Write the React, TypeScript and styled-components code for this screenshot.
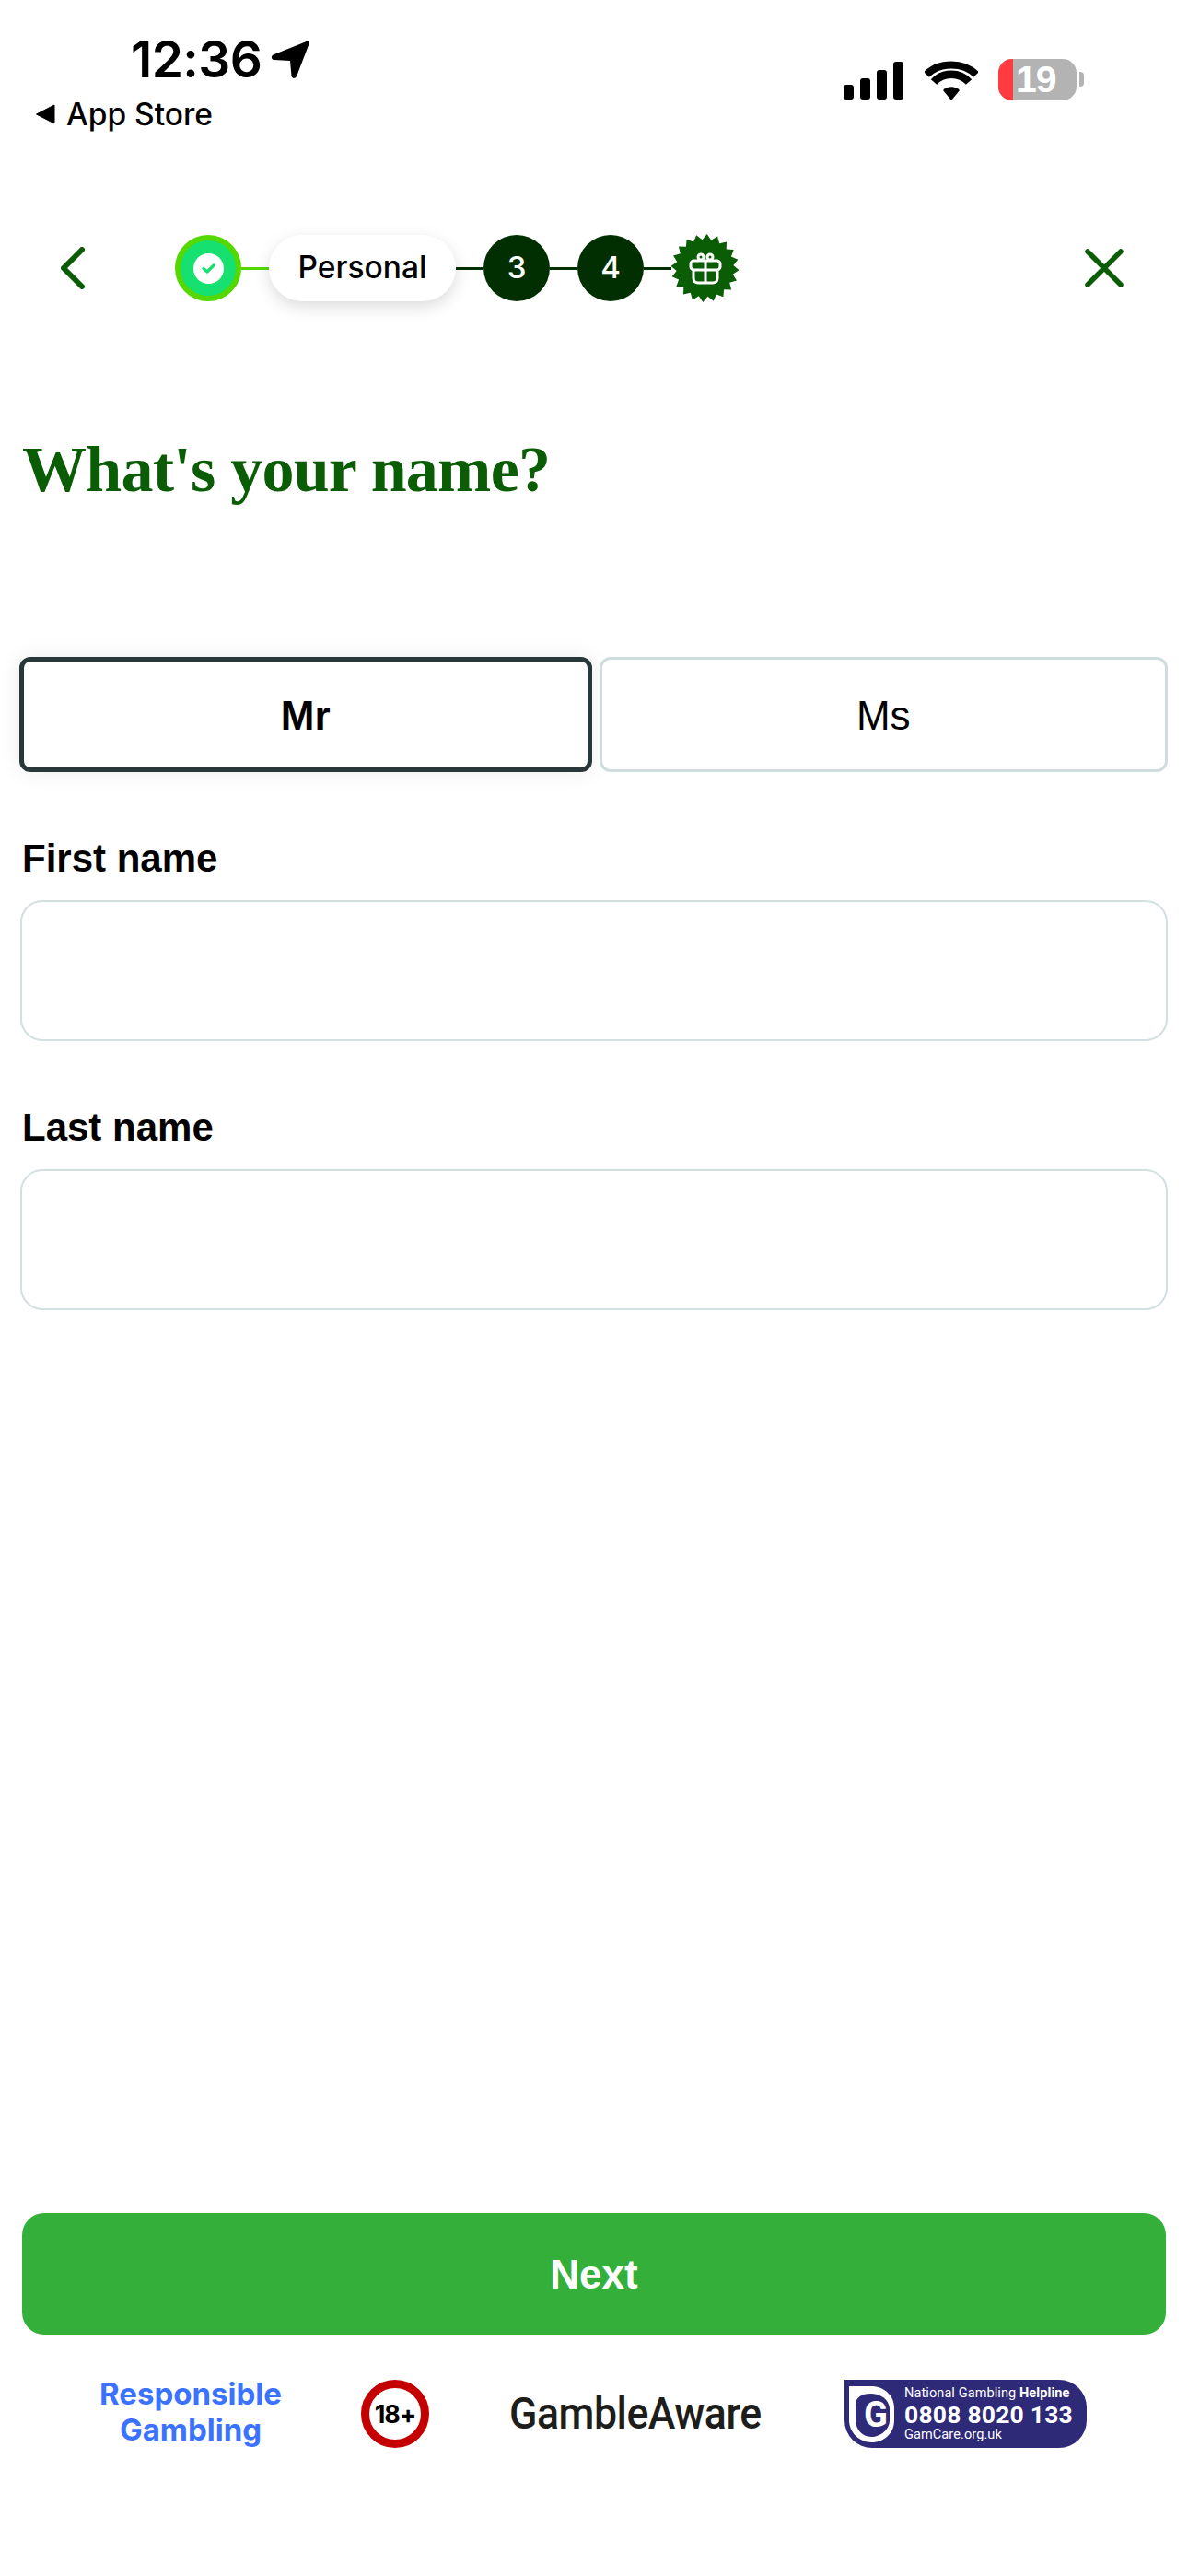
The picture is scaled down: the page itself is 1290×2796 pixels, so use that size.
import { FunctionComponent } from "react";
import styled, { createGlobalStyle } from "styled-components";

const GlobalStyle = createGlobalStyle`
  html, body {
    margin: 0;
    padding: 0;
    background: #fff;
  }
  * {
    box-sizing: border-box;
  }
`;

const Page = styled.div`
  width: 1290px;
  height: 2796px;
  display: flex;
  flex-direction: column;
  background: #fff;
  font-family: "Liberation Sans", Arial, sans-serif;
  color: #000;
`;

const StatusBar = styled.div`
  height: 255px;
  display: flex;
  justify-content: space-between;
  align-items: flex-start;
  font-family: Inter, "Liberation Sans", sans-serif;
`;

const StatusLeft = styled.div`
  display: flex;
  flex-direction: column;
  padding: 32px 0 0 38px;
`;

const TimeRow = styled.div`
  display: flex;
  align-items: center;
  gap: 10px;
  padding-left: 104px;
  height: 64px;
`;

const Time = styled.span`
  font-size: 55px;
  font-weight: 600;
  line-height: 64px;
  letter-spacing: -0.6px;
`;

const BackToApp = styled.div`
  display: flex;
  align-items: center;
  gap: 12px;
  height: 40px;
  margin-top: 8px;
  font-size: 33.5px;
  font-weight: 500;
  line-height: 40px;
`;

const StatusRight = styled.div`
  display: flex;
  align-items: flex-end;
  padding: 64px 113px 0 0;
`;

const Signal = styled.div`
  display: flex;
  align-items: flex-end;
  gap: 7px;
  height: 43px;
  padding-bottom: 1px;
`;

const SignalBar = styled.span<{ $h: number }>`
  width: 11px;
  height: ${(p) => p.$h}px;
  border-radius: 3px;
  background: #000;
`;

const WifiIcon = styled.svg`
  width: 58px;
  height: 43px;
  margin: 0 22px 0 23px;
`;

const Battery = styled.div`
  position: relative;
  width: 85px;
  height: 45px;
  border-radius: 15px;
  overflow: hidden;
  display: flex;
  align-items: center;
  padding-left: 19px;
  background: #b3b3b3;
  color: #fff;
  font-family: "Liberation Sans", sans-serif;
  font-size: 41px;
  font-weight: 700;
  letter-spacing: -1px;

  &::before {
    content: "";
    position: absolute;
    left: 0;
    top: 0;
    bottom: 0;
    width: 16px;
    background: #ff3b3f;
  }
`;

const BatteryNub = styled.span`
  width: 5px;
  height: 16px;
  margin: 0 0 15px 3px;
  border-radius: 0 4px 4px 0;
  background: #b3b3b3;
`;

const Nav = styled.div`
  height: 72px;
  display: flex;
  align-items: center;
  padding: 0 70px 0 66px;
`;

const NavIcon = styled.svg`
  display: block;
  flex: none;
`;

const Stepper = styled.div`
  display: flex;
  align-items: center;
  margin-left: 98px;
  margin-right: auto;
`;

const Connector = styled.span<{ $done?: boolean }>`
  width: 30px;
  height: 3px;
  background: ${(p) => (p.$done ? "#55d800" : "#022f02")};
`;

const DoneStep = styled.div`
  width: 72px;
  height: 72px;
  border-radius: 50%;
  border: 6px solid #55d800;
  background: #16e070;
  display: flex;
  align-items: center;
  justify-content: center;
`;

const DoneDot = styled.div`
  width: 33px;
  height: 33px;
  border-radius: 50%;
  background: #fff;
  display: flex;
  align-items: center;
  justify-content: center;
`;

const ActivePill = styled.div`
  width: 203px;
  height: 72px;
  padding-bottom: 2px;
  border-radius: 36px;
  background: #fff;
  box-shadow: 0 6px 18px rgba(0, 0, 0, 0.14);
  display: flex;
  align-items: center;
  justify-content: center;
  font-family: Inter, "Liberation Sans", sans-serif;
  font-size: 33.5px;
  font-weight: 500;
`;

const NumberStep = styled.div`
  width: 72px;
  height: 72px;
  padding-bottom: 2px;
  border-radius: 50%;
  background: #022f02;
  color: #fff;
  display: flex;
  align-items: center;
  justify-content: center;
  font-family: Inter, "Liberation Sans", sans-serif;
  font-size: 33px;
  font-weight: 500;
`;

const GiftStep = styled.div`
  position: relative;
  width: 73px;
  height: 74px;
  display: flex;
  align-items: center;
  justify-content: center;

  svg.burst {
    position: absolute;
    inset: 0;
  }

  svg.gift {
    position: relative;
  }
`;

const Title = styled.h1`
  margin: 143px 0 0 24px;
  font-family: "Liberation Serif", "Times New Roman", serif;
  font-size: 70px;
  font-weight: 700;
  line-height: 80px;
  letter-spacing: -0.75px;
  color: #0a5c05;
`;

const GenderRow = styled.div`
  display: flex;
  gap: 8px;
  margin-top: 163px;
  padding: 0 22px 0 21px;
`;

const GenderButton = styled.button<{ $active?: boolean }>`
  flex: 1;
  height: 125px;
  padding: 2px 0 0;
  border-radius: 12px;
  background: #fff;
  color: #000;
  font-family: "Liberation Sans", Arial, sans-serif;
  font-size: 44px;
  font-weight: ${(p) => (p.$active ? 700 : 400)};
  border: ${(p) => (p.$active ? "5px solid #27373a" : "3px solid #d0dddf")};
  box-shadow: ${(p) => (p.$active ? "0 0 24px rgba(0, 0, 0, 0.08)" : "none")};
`;

const Field = styled.div`
  display: flex;
  flex-direction: column;
  padding: 0 22px 0 22px;
  margin-top: 69px;
`;

const Label = styled.label`
  margin-left: 2px;
  font-size: 42px;
  font-weight: 700;
  line-height: 50px;
  margin-bottom: 20px;
`;

const TextInput = styled.input`
  height: 153px;
  border: 2px solid #d3dfe0;
  border-radius: 24px;
  background: #fff;
  outline: none;
`;

const Spacer = styled.div`
  flex: 1;
`;

const NextButton = styled.button`
  display: block;
  margin: 0 24px;
  height: 132px;
  padding: 2px 0 0;
  border: none;
  border-radius: 24px;
  background: #34b03a;
  color: #fff;
  font-family: "Liberation Sans", Arial, sans-serif;
  font-size: 44px;
  font-weight: 700;
`;

const Footer = styled.div`
  height: 262px;
  display: flex;
  align-items: flex-start;
  padding: 49px 0 0 108px;
`;

const Responsible = styled.div`
  width: 198px;
  text-align: center;
  font-family: Inter, "Liberation Sans", sans-serif;
  font-size: 33px;
  font-weight: 700;
  line-height: 39px;
  color: #3b72ff;
  white-space: nowrap;
  margin-top: -4px;
`;

const AgeBadge = styled.div`
  width: 74px;
  height: 74px;
  margin-left: 86px;
  border: 9px solid #c40000;
  border-radius: 50%;
  display: flex;
  align-items: center;
  justify-content: center;
  font-family: Inter, "Liberation Sans", sans-serif;
  font-size: 27px;
  font-weight: 700;
  letter-spacing: -1px;
`;

const GambleAware = styled.div`
  margin-left: 87px;
  width: 276px;
  height: 74px;
  font-family: Roboto, "Liberation Sans", sans-serif;
  font-size: 49px;
  font-weight: 500;
  line-height: 74px;
  letter-spacing: -0.5px;
  color: #1d1d1b;
  white-space: nowrap;
  transform: scaleX(0.91);
  transform-origin: left center;
`;

const Helpline = styled.div`
  margin-left: 88px;
  width: 263px;
  height: 74px;
  display: flex;
  align-items: center;
  padding-left: 5px;
  border-radius: 0 30px 30px 30px;
  background: #2e2a78;
  color: #fff;
  font-family: Roboto, "Liberation Sans", sans-serif;
`;

const HelplineText = styled.div`
  display: flex;
  flex-direction: column;
  margin-left: 11px;
  white-space: nowrap;
`;

const HelplineSmall = styled.span`
  font-size: 14.5px;
  line-height: 18px;
  letter-spacing: 0.1px;

  b {
    font-weight: 700;
  }
`;

const HelplineNumber = styled.span`
  font-size: 26.5px;
  font-weight: 700;
  line-height: 27px;
  letter-spacing: 0.2px;
`;

// 20 point burst behind the gift icon
const burstPoints = Array.from({ length: 40 }, (_, i) => {
  const angle = (i * Math.PI) / 20 - Math.PI / 2 + 0.06;
  const r = i % 2 === 0 ? 37 : 31;
  return `${(36.5 + r * Math.cos(angle)).toFixed(2)},${(37 + r * Math.sin(angle)).toFixed(2)}`;
}).join(" ");

const signalHeights = [16, 23, 32, 41];

const App: FunctionComponent = () => {
  return (
    <Page>
      <GlobalStyle />
      <StatusBar>
        <StatusLeft>
          <TimeRow>
            <Time>12:36</Time>
            <NavIcon width="44" height="44" viewBox="0 0 44 44">
              <path
                d="M40 2.500 C41.500 2 42.500 3 42 4.500 L28 41 C27 43.500 23 43.500 22.500 40.500 L21 24 L3.500 23 C0.500 22.500 0 19 2.500 17.500 Z"
                fill="#000"
              />
            </NavIcon>
          </TimeRow>
          <BackToApp>
            <NavIcon width="22" height="22" viewBox="0 0 22 22">
              <path d="M21 1 V21 L1.500 11 Z" fill="#000" stroke="#000" strokeLinejoin="round" />
            </NavIcon>
            App Store
          </BackToApp>
        </StatusLeft>
        <StatusRight>
          <Signal>
            {signalHeights.map((h) => (
              <SignalBar key={h} $h={h} />
            ))}
          </Signal>
          <WifiIcon viewBox="0 0 58 43">
            <path d="M29 43 L20 32 C25 27 33 27 38 32 Z" fill="#000" />
            <path d="M10 22 C20 11 38 11 48 22" fill="none" stroke="#000" strokeWidth="8.500" transform="translate(0 1)" />
            <path d="M2 11 C16 -3 42 -3 56 11" fill="none" stroke="#000" strokeWidth="8" transform="translate(0 4)" />
          </WifiIcon>
          <Battery>19</Battery>
          <BatteryNub />
        </StatusRight>
      </StatusBar>

      <Nav>
        <NavIcon width="26" height="46" viewBox="0 0 26 46">
          <path d="M23 3 L3 23 L23 43" fill="none" stroke="#0a5c05" strokeWidth="6" strokeLinecap="round" strokeLinejoin="round" />
        </NavIcon>
        <Stepper>
          <DoneStep>
            <DoneDot>
              <svg width="15" height="11" viewBox="0 0 15 11">
                <path d="M2 5.500 L6 9 L13 2" fill="none" stroke="#16e070" strokeWidth="3.200" strokeLinecap="round" strokeLinejoin="round" />
              </svg>
            </DoneDot>
          </DoneStep>
          <Connector $done />
          <ActivePill>Personal</ActivePill>
          <Connector />
          <NumberStep>3</NumberStep>
          <Connector />
          <NumberStep>4</NumberStep>
          <Connector />
          <GiftStep>
            <svg className="burst" width="73" height="74" viewBox="0 0 73 74">
              <polygon points={burstPoints} fill="#0a5c05" />
            </svg>
            <svg className="gift" width="36" height="36" viewBox="0 0 36 36" fill="none" stroke="#fff" strokeWidth="3">
              <circle cx="13" cy="6" r="3" />
              <circle cx="23" cy="6" r="3" />
              <rect x="2" y="10" width="32" height="10" rx="3.500" />
              <path d="M5 20 V29 C5 32 7 34 10 34 H26 C29 34 31 32 31 29 V20" />
              <path d="M18 10 V34" />
            </svg>
          </GiftStep>
        </Stepper>
        <NavIcon width="42" height="42" viewBox="0 0 42 42">
          <path d="M3 3 L39 39 M39 3 L3 39" fill="none" stroke="#0a5c05" strokeWidth="5.500" strokeLinecap="round" />
        </NavIcon>
      </Nav>

      <Title>What's your name?</Title>

      <GenderRow>
        <GenderButton $active>Mr</GenderButton>
        <GenderButton>Ms</GenderButton>
      </GenderRow>

      <Field>
        <Label>First name</Label>
        <TextInput />
      </Field>
      <Field>
        <Label>Last name</Label>
        <TextInput />
      </Field>

      <Spacer />

      <NextButton>Next</NextButton>

      <Footer>
        <Responsible>
          Responsible
          <br />
          Gambling
        </Responsible>
        <AgeBadge>18+</AgeBadge>
        <GambleAware>GambleAware</GambleAware>
        <Helpline>
          <svg width="49" height="61" viewBox="0 0 49 61">
            <path d="M0 0 H24 C38 0 49 10 49 24 V37 C49 51 38 61 24.500 61 C11 61 0 50 0 37 Z" fill="#fff" />
            <path d="M7 20 C7 12 14 8 23 8 C34 8 43 14 44 24 V37 C44 47 34 55 24 55 C14 55 7 46 7 37 Z" fill="#2e2a78" />
            <text x="29" y="44" textAnchor="middle" fontFamily="Roboto, sans-serif" fontSize="38" fontWeight="700" fill="#fff">G</text>
          </svg>
          <HelplineText>
            <HelplineSmall>
              National Gambling <b>Helpline</b>
            </HelplineSmall>
            <HelplineNumber>0808 8020 133</HelplineNumber>
            <HelplineSmall>GamCare.org.uk</HelplineSmall>
          </HelplineText>
        </Helpline>
      </Footer>
    </Page>
  );
};

export default App;
